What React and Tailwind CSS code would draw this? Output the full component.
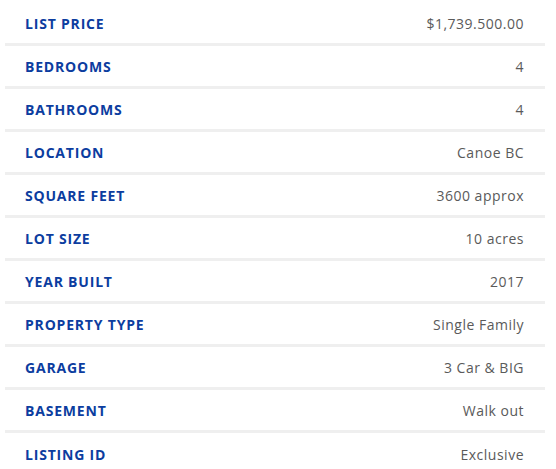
import React from 'react';

const rows = [
  ['LIST PRICE', '$1,739.500.00'],
  ['BEDROOMS', '4'],
  ['BATHROOMS', '4'],
  ['LOCATION', 'Canoe BC'],
  ['SQUARE FEET', '3600 approx'],
  ['LOT SIZE', '10 acres'],
  ['YEAR BUILT', '2017'],
  ['PROPERTY TYPE', 'Single Family'],
  ['GARAGE', '3 Car & BIG'],
  ['BASEMENT', 'Walk out'],
  ['LISTING ID', 'Exclusive'],
];

const App = () => {
  return (
    <div className="w-[556px] h-[469px] bg-white overflow-hidden pt-[3px] pl-[5px] pr-[11px] font-['Open_Sans',sans-serif]">
      {rows.map(([label, value], i) => (
        <div
          key={label}
          className={`flex items-center justify-between h-[43px] pl-5 pr-[21px] ${i < rows.length - 1 ? 'border-b-[3px] border-[#efefef]' : ''}`}
        >
          <span className="text-[14px] font-bold text-[#0c3d9f] tracking-[0.8px]">{label}</span>
          <span className="text-[14px] text-[#5a5a5a] tracking-[0.5px]">{value}</span>
        </div>
      ))}
    </div>
  );
};

export default App;
